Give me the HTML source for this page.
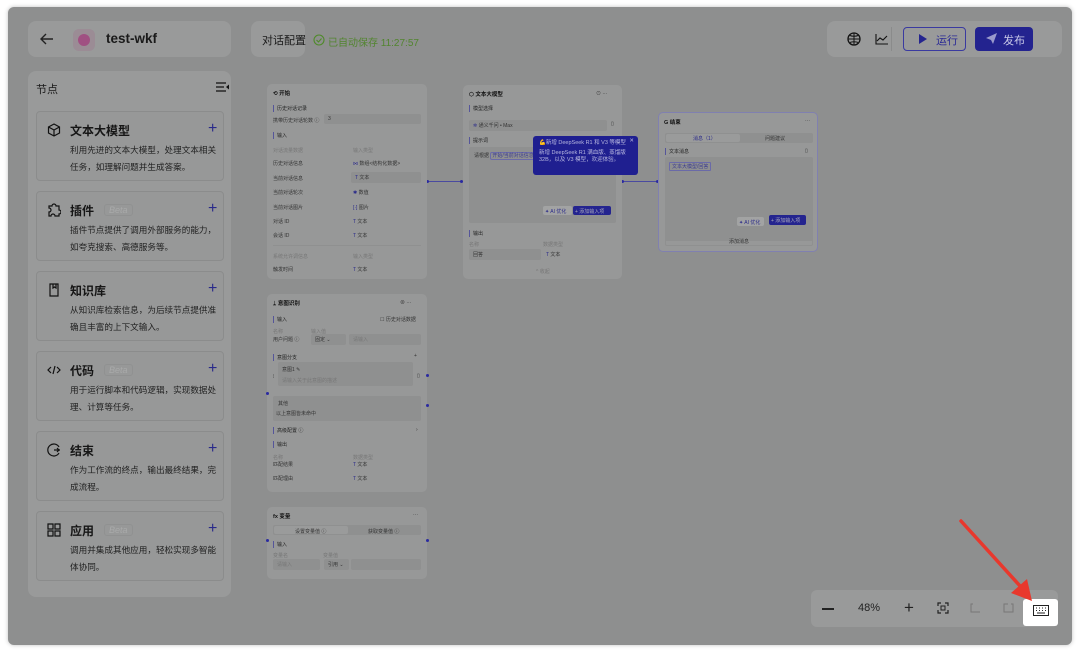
<!DOCTYPE html>
<html><head><meta charset="utf-8"><style>
*{box-sizing:border-box;margin:0;padding:0}
body{width:1080px;height:652px;background:#fff;position:relative;overflow:hidden;font-family:"Liberation Sans","Noto Sans CJK SC",sans-serif;color:#1c1c1c}
.ab{position:absolute}
.bg{left:8px;top:7px;width:1064px;height:638px;background:#8e8f8f;border-radius:6px;box-shadow:0 0 4px rgba(0,0,0,.25)}
.pn{background:#999a9a;border-radius:8px}
.card{position:absolute;left:36px;width:188px;height:70px;border:1px solid #8b8c8c;border-radius:4px;background:#979898}
.card .t{position:absolute;left:33px;top:10px;font-size:12px;font-weight:bold;color:#161616}
.card .d{position:absolute;left:33px;top:30px;width:152px;font-size:8.6px;line-height:17px;color:#222}
.card .p{position:absolute;left:171px;top:8px;font-size:16px;color:#2a2a8a}
.card .i{position:absolute;left:10px;top:11px;width:14px;height:14px}
.beta{display:inline-block;margin-left:10px;font-size:9px;font-style:italic;color:#a9aaaa;border:1px solid #909191;border-radius:3px;padding:0 4px;font-weight:normal;vertical-align:2px}
.node{position:absolute;background:#979898;border-radius:5px;font-size:5px;color:#333}
.node div{position:absolute;white-space:nowrap}
.h{font-size:5.5px;color:#111;font-weight:bold}
.sec{border-left:1px solid #55559a;padding-left:3px;color:#222}
.g{color:#777}
.fld{background:#8f9090;border-radius:2px}
.tt{color:#2b2b8a}
.dot{position:absolute;width:3px;height:3px;background:#2a2aa0;border-radius:50%}
</style></head><body>
<div class="ab bg"></div>

<!-- header -->
<div class="ab pn" style="left:28px;top:21px;width:203px;height:36px"></div>
<svg class="ab" style="left:40px;top:33px" width="14" height="12" viewBox="0 0 14 12"><path d="M13 6H2M6 1L1 6l5 5" stroke="#222" stroke-width="1.4" fill="none"/></svg>
<div class="ab" style="left:73px;top:29px;width:22px;height:22px;border-radius:6px;background:#9b8c95"></div>
<div class="ab" style="left:78px;top:34px;width:12px;height:12px;border-radius:50%;background:#a05082"></div>
<div class="ab" style="left:106px;top:31px;font-size:13.5px;font-weight:bold;color:#1a1a1a">test-wkf</div>
<div class="ab pn" style="left:251px;top:21px;width:54px;height:36px"></div>
<div class="ab" style="left:262px;top:32px;font-size:11px;color:#1a1a1a">对话配置</div>
<svg class="ab" style="left:313px;top:34px" width="12" height="12"><circle cx="6" cy="6" r="5" stroke="#4f8a2a" stroke-width="1.1" fill="none"/><path d="M3.5 6l2 2 3-3.5" stroke="#4f8a2a" stroke-width="1.1" fill="none"/></svg>
<div class="ab" style="left:328px;top:34px;font-size:10px;color:#52852f">已自动保存 11:27:57</div>

<div class="ab pn" style="left:827px;top:21px;width:235px;height:36px"></div>
<svg class="ab" style="left:847px;top:32px" width="14" height="14" viewBox="0 0 14 14"><circle cx="7" cy="7" r="6" stroke="#111" stroke-width="1.3" fill="none"/><path d="M1 7h12M7 1v12M3 3.5c2 1 6 1 8 0M3 10.5c2-1 6-1 8 0" stroke="#111" stroke-width="1" fill="none"/></svg>
<svg class="ab" style="left:875px;top:33px" width="13" height="12"><path d="M1 1v10h12M2 8l3-3 3 2 4-4" stroke="#111" stroke-width="1.1" fill="none"/></svg>
<div class="ab" style="left:891px;top:27px;width:1px;height:24px;background:#8a8b8b"></div>
<div class="ab" style="left:903px;top:27px;width:63px;height:24px;border:1px solid #3a3aa0;border-radius:4px"></div>
<svg class="ab" style="left:918px;top:34px" width="9" height="10"><path d="M1 0l8 5-8 5z" fill="#25258f"/></svg>
<div class="ab" style="left:936px;top:32px;font-size:11px;color:#2b2b95">运行</div>
<div class="ab" style="left:975px;top:27px;width:58px;height:24px;background:#23238f;border-radius:4px"></div>
<svg class="ab" style="left:986px;top:33px" width="11" height="11"><path d="M0 5l11-5-4 11-2-4z" fill="#9a9acc"/></svg>
<div class="ab" style="left:1003px;top:32px;font-size:11px;color:#c8c8e8">发布</div>

<!-- sidebar -->
<div class="ab pn" style="left:28px;top:71px;width:203px;height:526px"></div>
<div class="ab" style="left:36px;top:81px;font-size:11px;color:#1a1a1a">节点</div>
<svg class="ab" style="left:216px;top:82px" width="14" height="10"><path d="M0 1h10M0 5h8M0 9h10" stroke="#111" stroke-width="1.2"/><path d="M10 5l3-2.5v5z" fill="#111"/></svg>

<div class="card" style="top:111px"><svg class="i" viewBox="0 0 14 14"><path d="M7 1l5.5 3v6L7 13 1.5 10V4zM1.5 4L7 7l5.5-3M7 7v6" stroke="#111" stroke-width="1.2" fill="none"/></svg><div class="t">文本大模型</div><div class="p">+</div><div class="d">利用先进的文本大模型，处理文本相关任务，如理解问题并生成答案。</div></div>
<div class="card" style="top:191px"><svg class="i" viewBox="0 0 14 14"><path d="M2 3h3a2 2 0 014 0h3v4a2 2 0 010 4v2H8a2 2 0 00-4 0H2V9a2 2 0 000-4z" stroke="#111" stroke-width="1.2" fill="none"/></svg><div class="t">插件<span class="beta">Beta</span></div><div class="p">+</div><div class="d">插件节点提供了调用外部服务的能力，如夸克搜索、高德服务等。</div></div>
<div class="card" style="top:271px"><svg class="i" viewBox="0 0 14 14"><path d="M3 1h8v12H3zM6 1v4l1.5-1L9 5V1" stroke="#111" stroke-width="1.2" fill="none"/></svg><div class="t">知识库</div><div class="p">+</div><div class="d">从知识库检索信息，为后续节点提供准确且丰富的上下文输入。</div></div>
<div class="card" style="top:351px"><svg class="i" viewBox="0 0 14 14"><path d="M4 4L1 7l3 3M10 4l3 3-3 3M8 3L6 11" stroke="#111" stroke-width="1.2" fill="none"/></svg><div class="t">代码<span class="beta">Beta</span></div><div class="p">+</div><div class="d">用于运行脚本和代码逻辑，实现数据处理、计算等任务。</div></div>
<div class="card" style="top:431px"><svg class="i" viewBox="0 0 14 14"><path d="M12 4A6 6 0 1012 10M7 7h6M10 5l2 2-2 2" stroke="#111" stroke-width="1.2" fill="none"/></svg><div class="t">结束</div><div class="p">+</div><div class="d">作为工作流的终点，输出最终结果，完成流程。</div></div>
<div class="card" style="top:511px"><svg class="i" viewBox="0 0 14 14"><path d="M1 1h5v5H1zM8 1h5v5H8zM1 8h5v5H1zM8 8h5v5H8z" stroke="#111" stroke-width="1.2" fill="none"/></svg><div class="t">应用<span class="beta">Beta</span></div><div class="p">+</div><div class="d">调用并集成其他应用，轻松实现多智能体协同。</div></div>

<!-- edges -->
<div class="ab" style="left:427px;top:181px;width:36px;height:1px;background:#4a4aa0"></div>
<div class="ab" style="left:622px;top:181px;width:36px;height:1px;background:#4a4aa0"></div>
<div class="dot" style="left:426px;top:180px"></div><div class="dot" style="left:460px;top:180px"></div>
<div class="dot" style="left:621px;top:180px"></div><div class="dot" style="left:656px;top:180px"></div>

<!-- 开始 -->
<div class="node" style="left:267px;top:84px;width:160px;height:195px">
<div class="h" style="left:6px;top:5px">⟲ 开始</div>
<div class="sec" style="left:6px;top:21px">历史对话记录</div>
<div style="left:6px;top:33px">携带历史对话轮数 ⓘ</div>
<div class="fld" style="left:57px;top:30px;width:97px;height:10px;padding:2px 4px">3</div>
<div class="sec" style="left:6px;top:48px">输入</div>
<div class="g" style="left:6px;top:63px">对话流量数据</div><div class="g" style="left:86px;top:63px">输入类型</div>
<div style="left:6px;top:76px">历史对话信息</div><div style="left:86px;top:76px"><span class="tt">⋈</span> 数组&lt;结构化数据&gt;</div>
<div style="left:6px;top:91px">当前对话信息</div><div class="fld" style="left:84px;top:88px;width:70px;height:11px;padding:2px 4px"><span class="tt">T</span> 文本</div>
<div style="left:6px;top:105px">当前对话轮次</div><div style="left:86px;top:105px"><span class="tt">✱</span> 数值</div>
<div style="left:6px;top:120px">当前对话图片</div><div style="left:86px;top:120px"><span class="tt">[·]</span> 图片</div>
<div style="left:6px;top:134px">对话 ID</div><div style="left:86px;top:134px"><span class="tt">T</span> 文本</div>
<div style="left:6px;top:148px">会话 ID</div><div style="left:86px;top:148px"><span class="tt">T</span> 文本</div>
<div style="left:6px;top:161px;width:148px;height:1px;background:#8f9090"></div>
<div class="g" style="left:6px;top:169px">系统允许调信息</div><div class="g" style="left:86px;top:169px">输入类型</div>
<div style="left:6px;top:182px">触发时间</div><div style="left:86px;top:182px"><span class="tt">T</span> 文本</div>
</div>

<!-- 文本大模型 -->
<div class="node" style="left:463px;top:85px;width:159px;height:194px">
<div class="h" style="left:6px;top:5px">⬡ 文本大模型</div>
<div style="left:133px;top:5px">⊙ ···</div>
<div class="sec" style="left:6px;top:20px">模型选择</div>
<div class="fld" style="left:6px;top:35px;width:138px;height:11px;padding:2px 4px"><span class="tt">✲</span> 通义千问 • Max</div>
<div style="left:148px;top:36px">▯</div>
<div class="sec" style="left:6px;top:52px">提示词</div>
<div class="fld" style="left:6px;top:62px;width:147px;height:76px"></div>
<div style="left:11px;top:67px">请根据 <span style="border:1px solid #6a6aa8;border-radius:2px;color:#3a3a90;padding:0 1px">开始/当前对话信息</span></div>
<div style="left:80px;top:121px;width:29px;height:9px;background:#a2a3a3;border-radius:2px;padding:2px;color:#2b2b8a">✦ AI 优化</div>
<div style="left:110px;top:121px;width:38px;height:9px;background:#24248f;border-radius:2px;padding:2px;color:#aab">+ 添加输入项</div>
<div class="sec" style="left:6px;top:145px">输出</div>
<div class="g" style="left:6px;top:156px">名称</div><div class="g" style="left:80px;top:156px">数据类型</div>
<div class="fld" style="left:6px;top:164px;width:72px;height:11px;padding:2px 4px">回答</div>
<div style="left:83px;top:166px"><span class="tt">T</span> 文本</div>
<div class="g" style="left:73px;top:183px">^ 收起</div>
</div>

<!-- tooltip -->
<div class="ab" style="left:533px;top:136px;width:105px;height:39px;background:#1f1f90;border-radius:3px;font-size:5.5px;color:#b8b8e0;padding:4px 6px;line-height:7px">
<div>💪新增 DeepSeek R1 和 V3 等模型</div>
<div style="margin-top:3px">新增 DeepSeek R1 满血版、蒸馏版 32B，以及 V3 模型，欢迎体验。</div>
<div style="position:absolute;right:4px;top:2px">✕</div>
</div>

<!-- 结束 -->
<div class="node" style="left:658px;top:112px;width:160px;height:140px;border:1px solid #8080b0">
<div class="h" style="left:5px;top:5px">G 结束</div><div style="left:146px;top:5px">···</div>
<div style="left:6px;top:20px;width:148px;height:10px;background:#8f9090;border-radius:2px"></div>
<div style="left:7px;top:21px;width:74px;height:8px;background:#9a9b9b;border-radius:2px"></div>
<div class="tt" style="left:34px;top:22px">消息（1）</div><div style="left:106px;top:22px">问题建议</div>
<div class="sec" style="left:6px;top:35px">文本消息</div><div style="left:146px;top:35px">▯</div>
<div class="fld" style="left:6px;top:44px;width:148px;height:84px"></div>
<div style="left:10px;top:49px;border:1px solid #6a6aa8;color:#3a3a90;padding:0 2px;border-radius:1px">文本大模型/回答</div>
<div style="left:78px;top:104px;width:27px;height:9px;background:#a2a3a3;border-radius:2px;padding:2px;color:#2b2b8a">✦ AI 优化</div>
<div style="left:110px;top:102px;width:37px;height:10px;background:#24248f;border-radius:2px;padding:2px;color:#aab">+ 添加输入项</div>
<div style="left:6px;top:122px;width:148px;height:11px;border:1px solid #8f9090;border-radius:2px;text-align:center;padding-top:2px">添加消息</div>
</div>

<!-- 意图识别 -->
<div class="node" style="left:267px;top:294px;width:160px;height:198px">
<div class="h" style="left:6px;top:5px">ᛦ 意图识别</div><div style="left:133px;top:5px">⊗ ···</div>
<div class="sec" style="left:6px;top:22px">输入</div><div style="left:113px;top:22px">☐ 历史对话数据</div>
<div class="g" style="left:6px;top:34px">名称</div><div class="g" style="left:44px;top:34px">输入值</div>
<div style="left:6px;top:42px">用户问题 ⓘ</div>
<div class="fld" style="left:44px;top:40px;width:35px;height:11px;padding:2px 4px">固定 ⌄</div>
<div class="fld" style="left:82px;top:40px;width:72px;height:11px;padding:2px 4px;color:#777">请输入</div>
<div class="sec" style="left:6px;top:60px">意图分支</div><div style="left:147px;top:59px">+</div>
<div class="fld" style="left:11px;top:68px;width:135px;height:24px"></div>
<div style="left:15px;top:72px">意图1 ✎</div><div class="g" style="left:15px;top:83px">请输入关于此意图的描述</div>
<div style="left:6px;top:80px">⁞</div><div style="left:150px;top:79px">▯</div>
<div class="fld" style="left:6px;top:102px;width:148px;height:25px"></div>
<div style="left:11px;top:106px">其他</div><div style="left:9px;top:116px">以上意图皆未命中</div>
<div class="sec" style="left:6px;top:133px">高级配置 ⓘ</div><div style="left:149px;top:133px">›</div>
<div class="sec" style="left:6px;top:147px">输出</div>
<div class="g" style="left:6px;top:160px">名称</div><div class="g" style="left:86px;top:160px">数据类型</div>
<div style="left:6px;top:167px">匹配结果</div><div style="left:86px;top:167px"><span class="tt">T</span> 文本</div>
<div style="left:6px;top:181px">匹配理由</div><div style="left:86px;top:181px"><span class="tt">T</span> 文本</div>
</div>
<div class="dot" style="left:266px;top:392px"></div><div class="dot" style="left:426px;top:374px"></div><div class="dot" style="left:426px;top:404px"></div>

<!-- 变量 -->
<div class="node" style="left:267px;top:507px;width:160px;height:72px">
<div class="h" style="left:6px;top:5px">fx 变量</div><div style="left:146px;top:5px">···</div>
<div style="left:6px;top:18px;width:148px;height:10px;background:#8f9090;border-radius:2px"></div>
<div style="left:7px;top:19px;width:74px;height:8px;background:#9a9b9b;border-radius:2px"></div>
<div style="left:28px;top:21px">设置变量值 ⓘ</div><div style="left:101px;top:21px">获取变量值 ⓘ</div>
<div class="sec" style="left:6px;top:34px">输入</div>
<div class="g" style="left:6px;top:45px">变量名</div><div class="g" style="left:56px;top:45px">变量值</div>
<div class="fld" style="left:6px;top:52px;width:47px;height:11px;padding:2px 4px;color:#777">请输入</div>
<div class="fld" style="left:57px;top:52px;width:25px;height:11px;padding:2px 4px">引用 ⌄</div>
<div class="fld" style="left:84px;top:52px;width:70px;height:11px"></div>
</div>
<div class="dot" style="left:266px;top:539px"></div><div class="dot" style="left:426px;top:539px"></div>

<!-- bottom toolbar -->
<div class="ab" style="left:811px;top:590px;width:247px;height:37px;background:#999a9a;border-radius:6px"></div>
<div class="ab" style="left:822px;top:608px;width:12px;height:1.5px;background:#222"></div>
<div class="ab" style="left:858px;top:602px;font-size:11px;color:#222">48%</div>
<div class="ab" style="left:904px;top:598px;font-size:17px;color:#222">+</div>
<svg class="ab" style="left:937px;top:602px" width="12" height="12"><path d="M1 4V1h3M8 1h3v3M11 8v3H8M4 11H1V8" stroke="#222" stroke-width="1.2" fill="none"/><rect x="4" y="4" width="4" height="4" stroke="#222" fill="none"/></svg>
<svg class="ab" style="left:970px;top:603px" width="11" height="10"><path d="M3 1H1v8h9" stroke="#777" stroke-width="1" fill="none"/></svg>
<svg class="ab" style="left:1003px;top:603px" width="11" height="10"><path d="M8 1h2v8H1V1h4" stroke="#777" stroke-width="1" fill="none"/></svg>
<div class="ab" style="left:1023px;top:599px;width:35px;height:27px;background:#fff;border-radius:3px"></div>
<svg class="ab" style="left:1033px;top:605px" width="16" height="11"><rect x=".5" y=".5" width="15" height="10" stroke="#222" fill="none"/><path d="M3 3h1M6 3h1M9 3h1M12 3h1M3 5.5h1M6 5.5h1M9 5.5h1M12 5.5h1M4 8h8" stroke="#222"/></svg>
<svg class="ab" style="left:955px;top:515px" width="85" height="90"><path d="M6 6L66 72" stroke="#e8382d" stroke-width="3.5" stroke-linecap="round"/><path d="M56 78L77 86 72 64z" fill="#e8382d"/></svg>
</body></html>
